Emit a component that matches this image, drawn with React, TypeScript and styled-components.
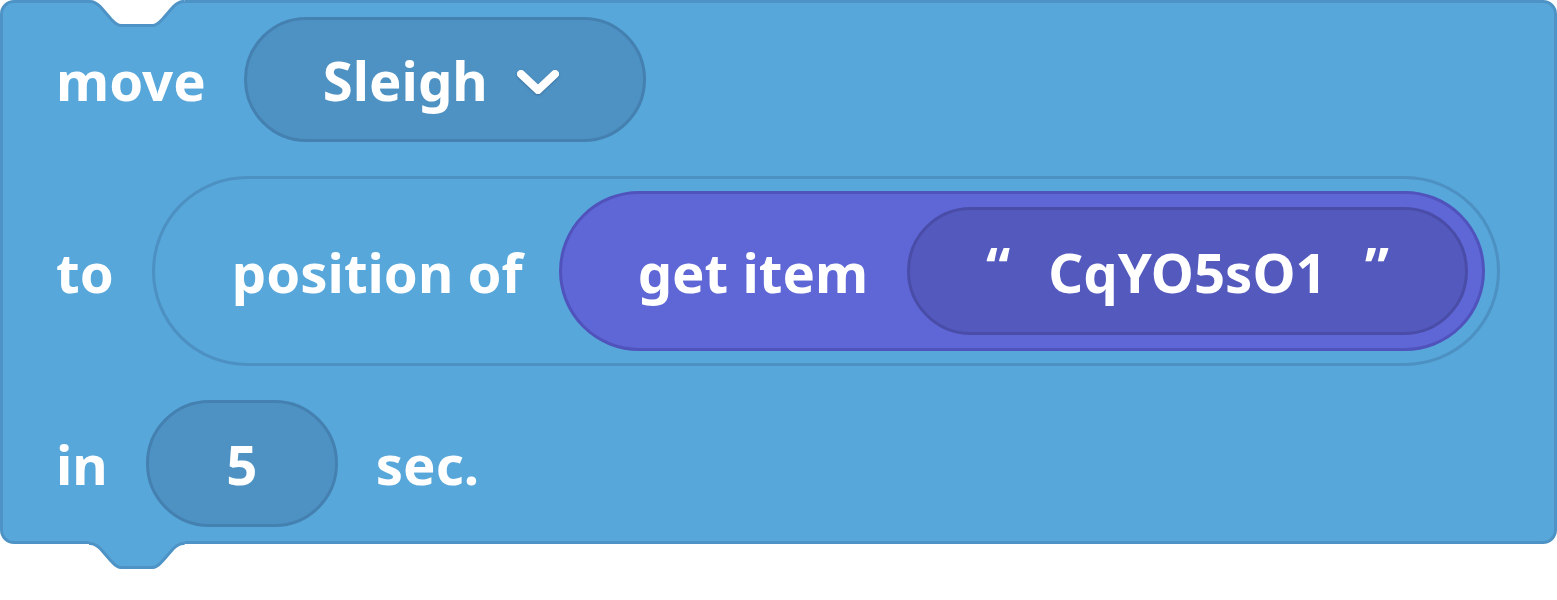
import React from "react";
import styled, { createGlobalStyle } from "styled-components";

const Global = createGlobalStyle`
  html, body { margin: 0; padding: 0; background: #ffffff; }
  body { font-family: "Noto Sans", "Open Sans", sans-serif; }
`;

const Stage = styled.div`
  width: 1557px;
  height: 600px;
`;

const Block = styled.div`
  position: relative;
  box-sizing: border-box;
  width: 1557px;
  height: 544px;
  background: #57a7da;
  border: 3px solid #4e93c6;
  border-radius: 14px;
  padding: 14px 0 14px 53px;
  display: flex;
  flex-direction: column;
  gap: 34px;
  font-family: "Noto Sans", "Open Sans", sans-serif;
  font-weight: 700;
  font-size: 54.5px;
  color: #ffffff;
`;

const Row = styled.div<{ $h: number }>`
  display: flex;
  align-items: center;
  gap: 38px;
  height: ${(p) => p.$h}px;
`;

const Label = styled.span`
  white-space: nowrap;
  line-height: 1;
  padding-top: 2px;
`;

const Pill = styled.div<{ $h: number }>`
  box-sizing: border-box;
  height: ${(p) => p.$h}px;
  border-radius: 999px;
  display: flex;
  align-items: center;
  white-space: nowrap;
`;

const Dropdown = styled(Pill)`
  background: #4e92c4;
  border: 3px solid #4481b1;
  padding: 0 83px 0 76px;
  gap: 28px;
`;

const NumberField = styled(Pill)`
  background: #4e92c4;
  border: 3px solid #4481b1;
  width: 192px;
  justify-content: center;
`;

const Slot = styled(Pill)`
  border: 3px solid #4d90c2;
  padding: 0 12px 0 77px;
  gap: 36px;
`;

const Reporter = styled(Pill)`
  background: #5f66d6;
  border: 3px solid #5153bd;
  padding: 0 14px 0 76px;
  gap: 39px;
`;

const StringField = styled(Pill)`
  background: #5459be;
  border: 3px solid #4a4da8;
  padding: 0 76px 0 76px;
  gap: 38px;
`;

const Quote = styled.span`
  line-height: 1;
  padding-bottom: 10px;
`;

const Chevron = styled.svg`
  width: 44px;
  height: 30px;
  margin-top: 4px;
  filter: drop-shadow(0 1px 1px rgba(40, 80, 120, 0.5));
`;

const TopNotch = styled.svg`
  position: absolute;
  left: 87px;
  top: -3px;
  width: 100px;
  height: 30px;
  overflow: visible;
`;

const BottomTab = styled.svg`
  position: absolute;
  left: 87px;
  bottom: -30px;
  width: 100px;
  height: 32px;
  overflow: visible;
`;

const notch =
  "c 5.2,0 7.8,2.6 10.4,5.2 l 10.4,12 c 2.6,2.6 5.2,6.8 10.4,6.8 h 31.2 c 5.2,0 7.8,-4.2 10.4,-6.8 l 10.4,-12 c 2.6,-2.6 5.2,-5.2 10.4,-5.2";

export default function App() {
  return (
    <Stage>
      <Global />
      <Block>
        <TopNotch viewBox="0 0 100 30">
          <path d={`M -1,0 L -1,1.5 L 0,1.5 ${notch} L 94.6,1.5 L 94.6,0 Z`} fill="#ffffff" />
          <path d={`M -1,1.5 L 0,1.5 ${notch} L 94.6,1.5`} fill="none" stroke="#4e93c6" strokeWidth={3} />
        </TopNotch>
        <BottomTab viewBox="0 0 100 32">
          <path d={`M -1,0 L -1,4.5 L 0,4.5 ${notch} L 94.6,4.5 L 94.6,0 Z`} fill="#57a7da" />
          <path d={`M -1,4.5 L 0,4.5 ${notch} L 94.6,4.5`} fill="none" stroke="#4e93c6" strokeWidth={3} />
        </BottomTab>

        <Row $h={125}>
          <Label>move</Label>
          <Dropdown $h={125}>
            <Label>Sleigh</Label>
            <Chevron viewBox="0 0 44 30">
              <polyline
                points="5,7 22,23 39,7"
                fill="none"
                stroke="#ffffff"
                strokeWidth={8}
                strokeLinecap="round"
                strokeLinejoin="round"
              />
            </Chevron>
          </Dropdown>
        </Row>

        <Row $h={190}>
          <Label>to</Label>
          <Slot $h={190}>
            <Label>position of</Label>
            <Reporter $h={160}>
              <Label>get item</Label>
              <StringField $h={128}>
                <Quote>“</Quote>
                <Label>CqYO5sO1</Label>
                <Quote>”</Quote>
              </StringField>
            </Reporter>
          </Slot>
        </Row>

        <Row $h={127}>
          <Label>in</Label>
          <NumberField $h={127}>
            <Label>5</Label>
          </NumberField>
          <Label>sec.</Label>
        </Row>
      </Block>
    </Stage>
  );
}
